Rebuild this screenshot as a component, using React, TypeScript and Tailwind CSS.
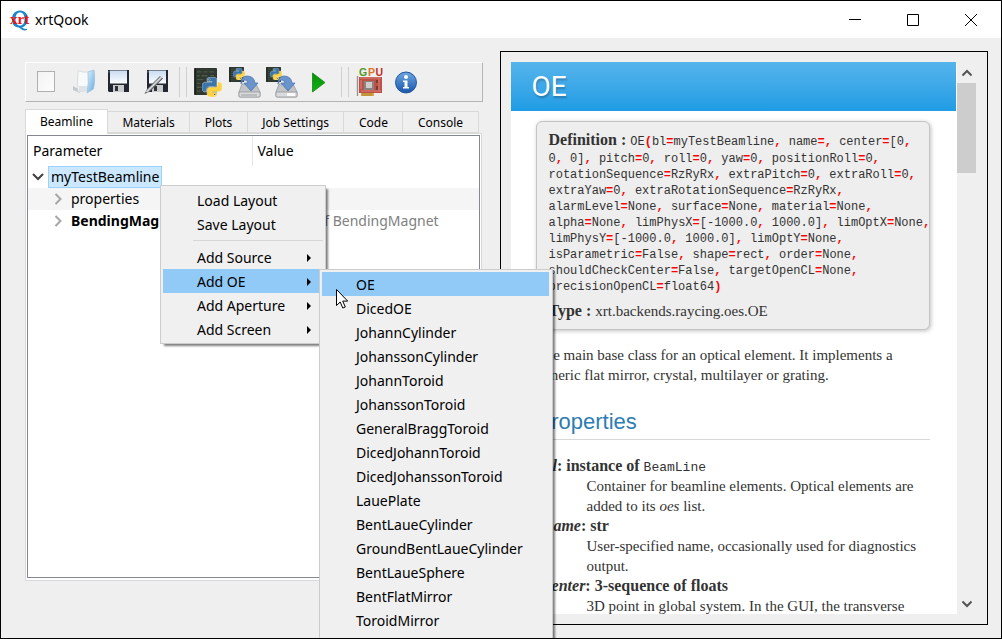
import { Fragment, type ReactNode } from "react";

const PY =
  "M14.25.18l.9.2.73.26.59.3.45.32.34.34.25.34.16.33.1.3.04.26.02.2-.01.13V8.5l-.05.63-.13.55-.21.46-.26.38-.3.31-.33.25-.35.19-.35.14-.33.1-.3.07-.26.04-.21.02H8.77l-.69.05-.59.14-.5.22-.41.27-.33.32-.27.35-.2.36-.15.37-.1.35-.07.32-.04.27-.02.21v3.06H3.17l-.21-.03-.28-.07-.32-.12-.35-.18-.36-.26-.36-.36-.35-.46-.32-.59-.28-.73-.21-.88-.14-1.05-.05-1.23.06-1.22.16-1.04.24-.87.32-.71.36-.57.4-.44.42-.33.42-.24.4-.16.36-.1.32-.05.24-.01h.16l.06.01h8.16v-.83H6.18l-.01-2.75-.02-.37.05-.34.11-.31.17-.28.25-.26.31-.23.38-.2.44-.18.51-.15.58-.12.64-.1.71-.06.77-.04.84-.02 1.27.05zm-6.3 1.98l-.23.33-.08.41.08.41.23.34.33.22.41.09.41-.09.33-.22.23-.34.08-.41-.08-.41-.23-.33-.33-.22-.41-.09-.41.09z";

function Python({ x, y, size }: { x: number; y: number; size: number }) {
  return (
    <svg x={x} y={y} width={size} height={size} viewBox="0 0 24 24">
      <path d={PY} fill="#3a76ab" stroke="#dfe6ec" strokeWidth="0.6" />
      <path d={PY} fill="#ffd240" stroke="#f4f0dd" strokeWidth="0.6" transform="rotate(180 12 12)" />
    </svg>
  );
}

function Board({ x, y, w, h }: { x: number; y: number; w: number; h: number }) {
  return (
    <svg x={x} y={y} width={w} height={h} viewBox="0 0 24 28" preserveAspectRatio="none">
      <rect width="24" height="28" rx="1" fill="#303831" />
      <path d="M3 4h5M10 4h4M16 4h5M3 8h3M8 8h6M3 12h7M13 12h3M3 16h4M9 16h3M3 20h6M3 24h4M9 24h3M17 8h4" stroke="#465a46" strokeWidth="1.4" />
      <path d="M1.5 0v28" stroke="#1c231d" strokeWidth="1.2" />
    </svg>
  );
}

function Floppy({ x }: { x: number }) {
  return (
    <svg x={x} y="6" width="21" height="22" viewBox="0 0 21 22">
      <path d="M0 0h21v22H1l-1-1z" fill="#23272f" />
      <rect x="2" y="0.5" width="17" height="13" fill="url(#label)" />
      <rect x="5" y="15" width="11" height="7" fill="#c9cbcd" />
      <rect x="7" y="16" width="3" height="5" fill="#2e3238" />
      <rect x="0.5" y="1" width="1" height="1.5" fill="#7d8794" />
    </svg>
  );
}

function Drive({ partial }: { partial?: boolean }) {
  return (
    <>
      <Board x={2} y={3} w={15} h={15} />
      <Python x={6} y={4} size={12} />
      <path d="M15 20h14l4 8v4q0 1-1 1H13q-1 0-1-1v-4z" fill="#c2c4c6" stroke="#8d9093" strokeWidth="0.7" />
      <path d="M12 28h21v4q0 1-1 1H13q-1 0-1-1z" fill="#d9dbdc" stroke="#8d9093" strokeWidth="0.7" />
      {partial ? <rect x="23" y="29" width="8" height="3" fill="#fff" /> : <path d="M14 31h16" stroke="#9c9fa1" />}
      <path d="M14 20Q14 12 20 12q7 0 8 7h3l-7 8-7-8h4q-1-3-3-3-3 0-4 4z" fill="#6a94cc" stroke="#4470ac" strokeWidth="0.7" />
    </>
  );
}

const tools: { label: string; art: ReactNode }[][] = [
  [
    {
      label: "New beamline",
      art: <rect x="9.5" y="7.5" width="17" height="20" fill="url(#paper)" stroke="#b0b0b0" />,
    },
    {
      label: "Open beamline",
      art: (
        <>
          <path d="M8 22l7 4v3l-7-3z" fill="#c4c8ca" />
          <path d="M13 7h3l1 1h7v18l-11 2q-1-10 0-21z" fill="#f8f9fa" stroke="#cfd3d6" strokeWidth="0.8" />
          <path d="M14 22v6l8-1v-5z" fill="#dfe3e6" />
          <path d="M23 8l6-2q1.5 11-.5 19L22 29q2-10 1-21z" fill="url(#cover)" stroke="#9fc4e2" strokeWidth="0.8" />
        </>
      ),
    },
    { label: "Save", art: <Floppy x={6} /> },
    {
      label: "Save as",
      art: (
        <>
          <Floppy x={8} />
          <path d="M5.500 30l2.500-5L21 12l3 2.500L11 27.500z" fill="#5b5e61" />
          <path d="M7.500 28L22.500 13" stroke="#d0d2d4" strokeWidth="2" />
        </>
      ),
    },
  ],
  [
    {
      label: "Generate Python script",
      art: (
        <>
          <Board x={4} y={4} w={23} h={27} />
          <Python x={12} y={13} size={20} />
        </>
      ),
    },
    { label: "Save script", art: <Drive /> },
    { label: "Save script as", art: <Drive partial /> },
    {
      label: "Run script",
      art: <path d="M11.500 9v19L24 18.500z" fill="url(#run)" stroke="#0c8a0c" strokeWidth="0.8" />,
    },
  ],
  [
    {
      label: "OpenCL info",
      art: (
        <>
          <path d="M5.500 12v20" stroke="#8f9496" strokeWidth="1.400" />
          <path d="M7 13h23v16H7z" fill="#bd5148" />
          <path d="M8 14h21M9 27h20M9 16v9M27 15v12" stroke="#d98076" strokeWidth="1" />
          <rect x="12" y="17" width="10" height="9" fill="#8b8380" />
          <rect x="14" y="18" width="6" height="6" fill="#cfcbc7" />
          <path d="M25 16v3M25 22v4" stroke="#7a3a34" strokeWidth="2" />
          <path d="M9 29h13v3H9z" fill="#d8a645" />
          <path d="M11 29v3M13 29v3M15 29v3M17 29v3M19 29v3" stroke="#94692a" strokeWidth="0.6" />
          <g fontFamily="Liberation Sans" fontWeight="700" fontSize="10.500">
            <text x="7" y="11.500" fill="#4e9a1f">G</text>
            <text x="16" y="11.500" fill="#d9742a">P</text>
            <text x="23.500" y="11.500" fill="#c32d23">U</text>
          </g>
        </>
      ),
    },
    {
      label: "About",
      art: (
        <>
          <circle cx="17" cy="18.500" r="10.500" fill="url(#info)" stroke="#1c55a0" />
          <circle cx="17" cy="13" r="2" fill="#fff" />
          <path d="M14 16.500h4.500V23H20v1.500h-6V23h1.500v-5H14z" fill="#fff" />
        </>
      ),
    },
  ],
];

const tabs = ["Beamline", "Materials", "Plots", "Job Settings", "Code", "Console"];

const elements = [
  "OE", "DicedOE", "JohannCylinder", "JohanssonCylinder", "JohannToroid", "JohanssonToroid",
  "GeneralBraggToroid", "DicedJohannToroid", "DicedJohanssonToroid", "LauePlate", "BentLaueCylinder",
  "GroundBentLaueCylinder", "BentLaueSphere", "BentFlatMirror", "ToroidMirror",
];

const signature = [
  "OE(bl=myTestBeamline, name=, center=[0,",
  "0, 0], pitch=0, roll=0, yaw=0, positionRoll=0,",
  "rotationSequence=RzRyRx, extraPitch=0, extraRoll=0,",
  "extraYaw=0, extraRotationSequence=RzRyRx,",
  "alarmLevel=None, surface=None, material=None,",
  "alpha=None, limPhysX=[-1000.0, 1000.0], limOptX=None,",
  "limPhysY=[-1000.0, 1000.0], limOptY=None,",
  "isParametric=False, shape=rect, order=None,",
  "shouldCheckCenter=False, targetOpenCL=None,",
  "precisionOpenCL=float64)",
];

function Code({ text }: { text: string }) {
  return (
    <>
      {text.split(/([=,()])/).map((part, i) =>
        /^[=(),]$/.test(part) ? (
          <b key={i} className="text-[#ff0000]">{part}</b>
        ) : (
          <Fragment key={i}>{part}</Fragment>
        ),
      )}
    </>
  );
}

function Chevron({ open }: { open?: boolean }) {
  return (
    <svg width="12" height="12" viewBox="0 0 12 12" fill="none" strokeWidth="2" className="shrink-0">
      {open ? <path d="M1 3l5 5 5-5" stroke="#404040" /> : <path d="M3.500 1l5 5-5 5" stroke="#a6a6a6" />}
    </svg>
  );
}

function MenuItem({ label, sub, active, children }: { label: string; sub?: boolean; active?: boolean; children?: ReactNode }) {
  return (
    <li role="none" className="relative">
      <button
        role="menuitem"
        className={`flex h-6 w-full items-center justify-between pt-[2px] pr-3 pl-[34px] text-left ${active ? "bg-[#91c9f7]" : ""}`}
      >
        {label}
        {sub && (
          <svg width="4" height="8" viewBox="0 0 4 8">
            <path d="M0 0v8l4-4z" fill="#000" />
          </svg>
        )}
      </button>
      {children}
    </li>
  );
}

const menuBox = "absolute border border-[#cccccc] bg-[#f0f0f0] py-[2px] pl-[2px] shadow-[3px_3px_2px_-1px_rgba(0,0,0,0.5)]";

export default function App() {
  return (
    <div className="relative flex h-screen flex-col overflow-hidden border border-black bg-[#efefef] font-['Noto_Sans',sans-serif] text-sm text-black">
      <svg width="0" height="0" className="absolute">
        <defs>
          <linearGradient id="label" x2="0" y2="1"><stop stopColor="#c9dcf0" /><stop offset="1" stopColor="#fafcff" /></linearGradient>
          <linearGradient id="paper" x2="1" y2="1"><stop stopColor="#f2f2f2" /><stop offset="1" stopColor="#fefefe" /></linearGradient>
          <linearGradient id="cover" x2="1" y2="1"><stop stopColor="#e6f3fc" /><stop offset="1" stopColor="#5fa9de" /></linearGradient>
          <linearGradient id="run" x2="0" y2="1"><stop stopColor="#0a8f0a" /><stop offset="1" stopColor="#12b012" /></linearGradient>
          <linearGradient id="info" x2="0" y2="1"><stop stopColor="#6ea6e0" /><stop offset="1" stopColor="#1857ac" /></linearGradient>
        </defs>
      </svg>

      <header className="flex h-[37px] shrink-0 items-center bg-white pr-px pl-2">
        <svg width="22" height="24" viewBox="0 0 22 24" aria-hidden="true">
          <path transform="translate(0 1.5)" d="M11 1c5 0 8 4 8 8.500S16 17 13 18q3 2 5 1.500v1Q14 22 10 18C5 18 3 14 3 9.500S6 1 11 1zm0 2C8 3 6.500 5.500 6.500 9.500S8 16 11 16s4.500-2.500 4.500-6.500S14 3 11 3z" fill="#1c86cc" />
          <text x="1" y="16" fontFamily="Liberation Serif" fontWeight="700" fontSize="15" fill="#f01414">xrt</text>
        </svg>
        <h1 className="ml-1">xrtQook</h1>
        <div className="ml-auto flex h-full">
          {[
            ["Minimize", "M0 5.500h12"],
            ["Maximize", "M.5.5h11v11H.5z"],
            ["Close", "M0 0l12 12M12 0L0 12"],
          ].map(([name, d]) => (
            <button key={name} aria-label={name} className="grid w-[58px] place-items-center">
              <svg width="12" height="12" viewBox="0 0 12 12" fill="none" stroke="#000"><path d={d} /></svg>
            </button>
          ))}
        </div>
      </header>

      <main className="grid min-h-0 flex-1 grid-cols-[458fr_487fr] grid-rows-[minmax(0,1fr)] gap-[17px] pr-[13px] pl-6">
        <section className="flex min-w-0 flex-col pt-6 pb-[57px]">
          <div role="toolbar" className="flex h-10 shrink-0 items-center border border-t-white border-r-[#b4b4b4] border-b-[#b4b4b4] border-l-white pl-[2px]">
            {tools.map((group, g) => (
              <Fragment key={g}>
                {g > 0 && <span className="mx-[3px] h-[30px] w-2 border-x border-[#d0d0d0]" />}
                {group.map((tool) => (
                  <button key={tool.label} aria-label={tool.label}>
                    <svg width="37" height="36" viewBox="0 0 37 36">{tool.art}</svg>
                  </button>
                ))}
              </Fragment>
            ))}
          </div>

          <div role="tablist" className="mt-[7px] mr-[5px] flex h-6 shrink-0 items-end text-xs whitespace-nowrap">
            {tabs.map((tab, i) => (
              <button
                key={tab}
                role="tab"
                aria-selected={i === 0}
                className={
                  i === 0
                    ? "relative top-px h-[25px] border border-b-0 border-[#d9d9d9] bg-white px-[14px]"
                    : "h-[22px] grow border border-l-0 border-[#d9d9d9] px-[14px] pt-px"
                }
              >
                {tab}
              </button>
            ))}
          </div>

          <div className="mr-[1px] min-h-0 flex-1 border border-[#d9d9d9] bg-white p-px pb-[2px]">
            <div className="h-full border border-[#828790]">
              <table className="w-full table-fixed border-collapse text-left whitespace-nowrap">
                <thead>
                  <tr className="h-[30px]">
                    <th className="w-[224px] border-r border-[#e5e5e5] pl-[5px] font-normal">Parameter</th>
                    <th className="pl-[5px] font-normal">Value</th>
                  </tr>
                </thead>
                <tbody>
                  <tr className="h-[22px]">
                    <td className="p-0">
                      <div className="flex h-[22px] items-center gap-1 pl-1">
                        <Chevron open />
                        <span className="flex h-[22px] items-center border border-[#99d1ff] bg-[#cce8ff] px-[2px]">myTestBeamline</span>
                      </div>
                    </td>
                    <td />
                  </tr>
                  <tr className="h-[22px] bg-[#f5f5f5]">
                    <td className="p-0">
                      <div className="flex h-[22px] items-center gap-[7px] pl-6"><Chevron />properties</div>
                    </td>
                    <td />
                  </tr>
                  <tr className="h-[22px]">
                    <td className="overflow-hidden p-0">
                      <div className="flex h-[22px] items-center gap-[7px] pl-6"><Chevron /><b>BendingMagnet</b></div>
                    </td>
                    <td className="p-0 pl-[5px] text-[#808080]">instance of BendingMagnet</td>
                  </tr>
                </tbody>
              </table>
            </div>
          </div>
        </section>

        <section className="mt-[13px] mb-[13px] flex min-w-0 border border-black py-[10px] pr-[11px] pl-[10px]">
          <article className="min-w-0 flex-1 overflow-hidden bg-white font-['Liberation_Serif',serif] text-[15px] leading-5 text-[#333333]">
            <h2 className="flex h-[49px] items-center bg-linear-to-b from-[#54b4eb] to-[#1d9ce5] pt-px pl-5 font-['Roboto',sans-serif] text-[28px] text-white [text-shadow:1px_2px_2px_rgba(0,0,0,0.25)]">
              OE
            </h2>
            <div className="pr-[26px] pl-[25px]">
              <div className="mt-[10px] rounded-md border border-[#c4c4c4] bg-[#eeeeee] pt-2 pb-2 pl-[11px] whitespace-nowrap shadow-[1px_1px_4px_rgba(0,0,0,0.25)]">
                {signature.map((line, i) => (
                  <div key={i} className={i === 0 ? "h-[19px]" : "h-4 leading-4"}>
                    {i === 0 && <b className="text-base leading-5">Definition : </b>}
                    <code className="font-['Liberation_Mono',monospace] text-xs leading-4"><Code text={line} /></code>
                  </div>
                ))}
                <p className="mt-2"><b className="text-base leading-5">Type : </b>xrt.backends.raycing.oes.OE</p>
              </div>
              <p className="mt-[15px]">
                The main base class for an optical element. It implements a<br />generic flat mirror, crystal, multilayer or grating.
              </p>
              <h3 className="mt-[19px] border-b border-[#d8d8d8] pt-2 pb-[7px] font-['Liberation_Sans',sans-serif] text-[22px] leading-5 text-[#2e7db2]">
                Properties
              </h3>
              <dl className="mt-4 pl-2 whitespace-nowrap">
                <dt className="text-base leading-5 font-bold"><i>bl</i>: instance of <code className="font-['Liberation_Mono',monospace] text-[13px] leading-4 font-normal">BeamLine</code></dt>
                <dd className="pl-[42px]">Container for beamline elements. Optical elements are<br />added to its <i>oes</i> list.</dd>
                <dt className="text-base leading-5 font-bold"><i>name</i>: str</dt>
                <dd className="pl-[42px]">User-specified name, occasionally used for diagnostics<br />output.</dd>
                <dt className="text-base leading-5 font-bold"><i>center</i>: 3-sequence of floats</dt>
                <dd className="pl-[42px]">3D point in global system. In the GUI, the transverse</dd>
              </dl>
            </div>
          </article>
          <div className="flex w-5 shrink-0 flex-col border-l border-white">
            <button aria-label="Scroll up" className="grid h-[21px] place-items-center">
              <svg width="10" height="8" viewBox="0 0 10 8" fill="none" stroke="#555" strokeWidth="2"><path d="M.5 6.500L5 2l4.500 4.500" /></svg>
            </button>
            <div className="h-[90px] bg-[#cdcdcd]" />
            <button aria-label="Scroll down" className="mt-auto grid h-[21px] place-items-center">
              <svg width="10" height="8" viewBox="0 0 10 8" fill="none" stroke="#555" strokeWidth="2"><path d="M.5 1.500L5 6l4.500-4.500" /></svg>
            </button>
          </div>
        </section>
      </main>

      <ul role="menu" className={`${menuBox} top-[184px] left-[159px] w-[166px] pr-[2px]`}>
        <MenuItem label="Load Layout" />
        <MenuItem label="Save Layout" />
        <li role="separator" className="my-[4px] ml-[30px] h-px bg-[#d7d7d7]" />
        <MenuItem label="Add Source" sub />
        <MenuItem label="Add OE" sub active>
          <ul role="menu" className={`${menuBox} top-0 left-[156px] z-10 w-[234px] pr-[3px]`}>
            {elements.map((name, i) => (
              <MenuItem key={name} label={name} active={i === 0} />
            ))}
            <li role="none" className="h-20" />
          </ul>
        </MenuItem>
        <MenuItem label="Add Aperture" sub />
        <MenuItem label="Add Screen" sub />
      </ul>

      <svg width="13" height="20" viewBox="0 0 13 20" className="absolute top-[288px] left-[335px] z-20">
        <path d="M.5.5v16l3.700-3.500 2.600 6 2.500-1-2.600-5.900h5z" fill="#fff" stroke="#000" />
      </svg>
    </div>
  );
}
